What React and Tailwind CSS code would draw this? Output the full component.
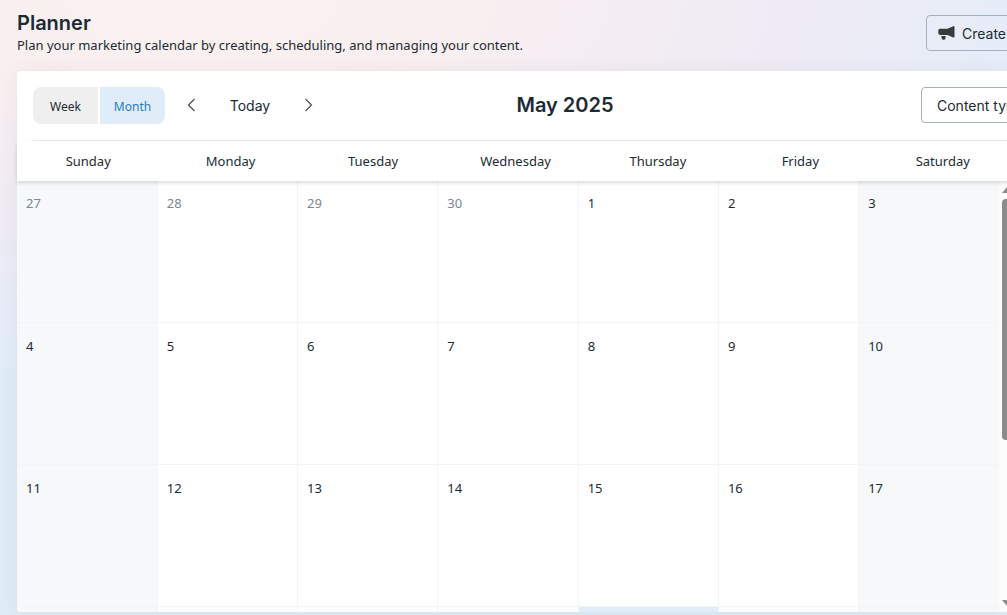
import clsx from 'clsx';

const WEEKDAYS = ['Sunday', 'Monday', 'Tuesday', 'Wednesday', 'Thursday', 'Friday', 'Saturday'];

// First visible day is 27 April 2025; "today" is highlighted in the fourth week.
const FIRST_DAY = new Date(2025, 3, 27);
const SHOWN_MONTH = 4;
const TODAY = 22;
const FULL_WEEKS = 3;

function buildWeeks(count) {
  return Array.from({ length: count }, (_, week) =>
    WEEKDAYS.map((_, day) => {
      const date = new Date(FIRST_DAY);
      date.setDate(date.getDate() + week * 7 + day);
      return date;
    })
  );
}

function Megaphone() {
  return (
    <svg width="17" height="16" viewBox="0 0 17 16" fill="#393b3c" aria-hidden="true">
      <path d="M15.200 1.200 9.500 3.800H2.200C1 3.800.3 4.500.3 5.600v2.500c0 1.100.7 1.800 1.900 1.800h7.300l5.700 2.600c.7.3 1.300 0 1.300-.7V1.900c0-.7-.6-1-1.300-.7Z" />
      <path d="M3.300 10.900h4.200v2.200c0 1-.6 1.700-1.600 1.700h-.6c-.8 0-1.300-.4-1.500-1.100Z" />
    </svg>
  );
}

function Chevron({ direction }) {
  return (
    <svg width="9" height="14" viewBox="0 0 9 14" fill="none" stroke="#4a4f54" strokeWidth="1.200" aria-hidden="true">
      <path d={direction === 'left' ? 'M7.500 1 1.500 7l6 6' : 'm1.500 1 6 6-6 6'} />
    </svg>
  );
}

function PageHeader() {
  return (
    <header className="flex h-[71px] items-start justify-between pt-3">
      <div>
        <h1 className="font-['Inter',sans-serif] text-[20px] leading-[22px] font-semibold">Planner</h1>
        <p className="text-[13px] leading-[22px]">
          Plan your marketing calendar by creating, scheduling, and managing your content.
        </p>
      </div>
      <button
        type="button"
        className="mt-[3px] -mr-10 flex h-9 w-32 shrink-0 items-center gap-[7px] rounded border border-[#a3b0be] px-[11px] font-['Inter',sans-serif] text-[14px]"
      >
        <Megaphone />
        Create
      </button>
    </header>
  );
}

function Toolbar() {
  return (
    <div className="-mr-[83px] ml-4 grid h-[70px] grid-cols-[1fr_auto_1fr] items-start border-b border-[#ededed] pt-4">
      <div className="flex">
        <div className="flex gap-[2px] text-[12px]">
          <button type="button" className="h-[37px] w-[65px] rounded-l-lg bg-[#efefef] pt-[2px]">
            Week
          </button>
          <button type="button" className="h-[37px] w-[65px] rounded-r-lg bg-[#e0edf8] pt-[2px] text-[#1f80c0]">
            Month
          </button>
        </div>
        <div className="ml-[22px] flex h-9 items-center font-['Inter',sans-serif] text-[14px]">
          <button type="button" aria-label="Previous month">
            <Chevron direction="left" />
          </button>
          <button type="button" className="w-[108px]">Today</button>
          <button type="button" aria-label="Next month">
            <Chevron direction="right" />
          </button>
        </div>
      </div>
      <h2 className="font-['Inter',sans-serif] text-[20px] leading-9 font-semibold">May 2025</h2>
      <button
        type="button"
        className="h-9 w-[176px] justify-self-end rounded border border-[#a3b0be] px-[15px] text-left font-['Inter',sans-serif] text-[14px]"
      >
        Content type
      </button>
    </div>
  );
}

function DayCell({ date, column, partial }) {
  const weekend = column === 0 || column === 6;
  const inMonth = date.getMonth() === SHOWN_MONTH;
  const today = inMonth && date.getDate() === TODAY;
  return (
    <td
      className={clsx(
        'border-[#f2f4f6] px-[9px] align-top leading-[22px]',
        partial ? 'h-2' : 'h-[142px] border-b pt-3',
        column < 6 && 'border-r',
        today ? 'bg-[#e0edf8]' : weekend && 'bg-[#f6f8fa]',
        inMonth ? 'text-[#1c2b33]' : 'text-[#7b8790]'
      )}
    >
      {!partial && date.getDate()}
    </td>
  );
}

function Scrollbar() {
  return (
    <div className="flex w-[15px] shrink-0 flex-col items-center bg-[#fcfcfc] pt-[7px] pb-[6px]">
      <svg width="10" height="6" fill="#8b8b8b" aria-hidden="true">
        <path d="M0 6 5 0l5 6Z" />
      </svg>
      <div className="flex-1 pt-[6px]">
        <div className="h-[60%] w-[9px] rounded bg-[#8b8b8b]" />
      </div>
      <svg width="10" height="6" fill="#8b8b8b" aria-hidden="true">
        <path d="m0 0 5 6 5-6Z" />
      </svg>
    </div>
  );
}

export default function App() {
  return (
    <div className="flex h-screen flex-col overflow-hidden bg-[radial-gradient(100%_65%_at_20%_0%,#fbf1f0_0%,#f9eff0_25%,#eeebf5_60%,#e6edf8_80%,#deecf8_100%)] pb-[3px] pl-[17px] font-['Noto_Sans',sans-serif] text-[13px] text-[#1c2b33]">
      <div className="-mr-[7px] flex min-h-0 flex-1 flex-col">
        <PageHeader />
        <main className="flex min-h-0 flex-1 flex-col rounded bg-white shadow-[0_0_20px_rgba(0,0,0,0.05)]">
          <Toolbar />
          <table className="relative w-full table-fixed bg-white shadow-[0_2px_4px_rgba(0,0,0,0.14)]">
            <thead>
              <tr className="h-10">
                {WEEKDAYS.map((name) => (
                  <th key={name} scope="col" className="pt-[2px] font-normal">
                    {name}
                  </th>
                ))}
              </tr>
            </thead>
          </table>
          <div className="-mt-px flex min-h-0 flex-1 overflow-hidden rounded-b">
            <div className="flex-1">
              <table className="w-full table-fixed">
                <tbody>
                  {buildWeeks(FULL_WEEKS + 1).map((week, index) => (
                    <tr key={week[0].toISOString()}>
                      {week.map((date, column) => (
                        <DayCell key={column} date={date} column={column} partial={index === FULL_WEEKS} />
                      ))}
                    </tr>
                  ))}
                </tbody>
              </table>
            </div>
            <Scrollbar />
          </div>
        </main>
      </div>
    </div>
  );
}
